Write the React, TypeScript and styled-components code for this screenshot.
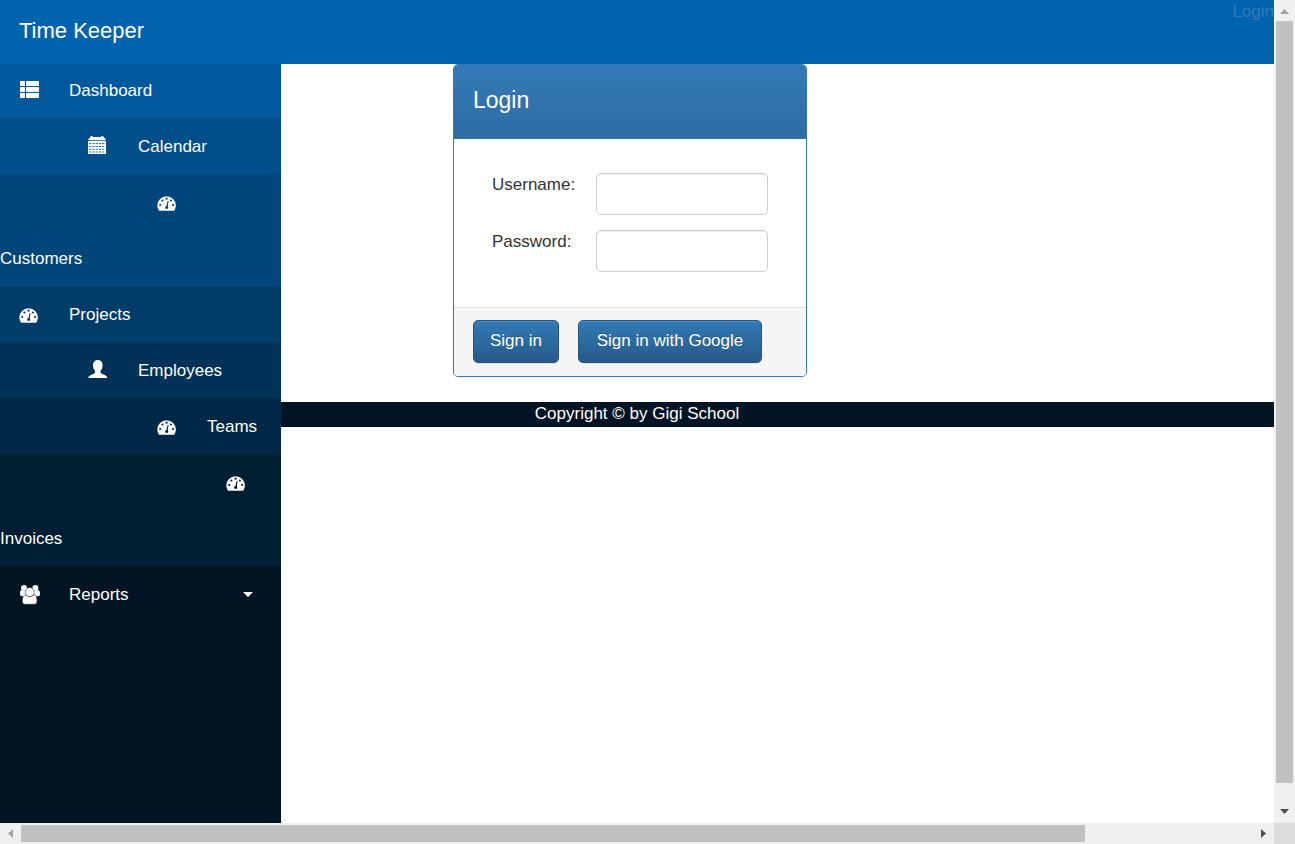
import React from "react";
import styled, { createGlobalStyle } from "styled-components";

const GlobalStyle = createGlobalStyle`
  *, *::before, *::after { box-sizing: border-box; }
  body {
    margin: 0;
    overflow: hidden;
    background: #fff;
    color: #333;
    font-family: "Liberation Sans", Arial, sans-serif;
    font-size: 17px;
    line-height: 23px;
  }
`;

/* Window frame: page plus its two scroll bars */

const Frame = styled.div`
  display: grid;
  grid-template-columns: minmax(0, 1fr) 21px;
  grid-template-rows: minmax(0, 1fr) 21px;
  height: 100vh;
`;

const Page = styled.div`
  display: flex;
  flex-direction: column;
  overflow: hidden;
`;

const ScrollBar = styled.div<{ $vertical?: boolean }>`
  display: flex;
  flex-direction: ${(p) => (p.$vertical ? "column" : "row")};
  background: #f0f0f0;
`;

const ScrollArrow = styled.svg`
  display: block;
  flex: none;
  width: 21px;
  height: 21px;
`;

const ScrollRail = styled.div<{ $vertical?: boolean }>`
  flex: 1;
  min-width: 0;
  min-height: 0;
  padding: ${(p) => (p.$vertical ? "0 2px" : "2px 0")};
`;

const ScrollThumb = styled.div<{ $vertical?: boolean; $size: number }>`
  width: ${(p) => (p.$vertical ? "100%" : `${p.$size}%`)};
  height: ${(p) => (p.$vertical ? `${p.$size}%` : "100%")};
  background: #c1c1c1;
`;

const ScrollCorner = styled.div`
  background: #dcdcdc;
`;

/* Header */

const Header = styled.header`
  position: relative;
  z-index: 1;
  display: flex;
  flex: none;
  align-items: flex-start;
  justify-content: space-between;
  height: 64px;
  margin-bottom: -1px;
  background: #0063ae;
`;

const Brand = styled.a`
  padding: 0 19px;
  color: #fff;
  font-size: 22px;
  line-height: 62px;
  text-decoration: none;
`;

const LoginLink = styled.a`
  color: #337ab7;
  text-decoration: none;
`;

/* Side navigation */

const Columns = styled.div`
  display: flex;
  flex: 1;
  min-height: 0;
`;

const Sidebar = styled.nav`
  flex: none;
  width: 281px;
  overflow: hidden;
  background: #001423;
`;

const NavList = styled.ul`
  margin: 0;
  padding: 0;
  list-style: none;
`;

const NavLink = styled.a<{ $shade: string }>`
  display: flex;
  flex-wrap: wrap;
  align-items: center;
  background: ${(p) => p.$shade};
  color: #fff;
  line-height: 56px;
  text-decoration: none;
`;

const NavIcon = styled.span<{ $step: number }>`
  display: flex;
  align-items: center;
  height: 56px;
  margin-left: ${(p) => 19 + p.$step * 69}px;
  margin-right: 28px;

  svg {
    width: 22px;
    height: 24px;
    fill: #fff;
  }
`;

const Caret = styled.span`
  margin: 0 28px 2px auto;
  border-top: 5px solid #fff;
  border-left: 5px solid transparent;
  border-right: 5px solid transparent;
`;

/* Main column */

const Main = styled.main`
  flex: 1;
  min-width: 0;
  padding-top: 1px;
`;

const Panel = styled.form`
  width: 354px;
  margin: 0 0 25px 172px;
  overflow: hidden;
  border: 1px solid #337ab7;
  border-radius: 5px;
  box-shadow: 0 1px 2px rgba(0, 0, 0, 0.05);
`;

const PanelHeading = styled.div`
  padding: 23px 19px 25px;
  border-bottom: 1px solid #337ab7;
  background: linear-gradient(to bottom, #337ab7 0%, #2e6da4 100%);
`;

const PanelTitle = styled.h1`
  margin: 0;
  color: #fff;
  font-size: 23px;
  font-weight: 400;
  line-height: 25px;
`;

const PanelBody = styled.div`
  display: flex;
  flex-direction: column;
  gap: 15px;
  padding: 34px 38px 35px;
`;

const Field = styled.div`
  display: flex;
  justify-content: space-between;
`;

const TextInput = styled.input`
  width: 172px;
  height: 42px;
  padding: 7px 15px;
  border: 1px solid #ccc;
  border-radius: 5px;
  background: #fff;
  box-shadow: inset 0 1px 1px rgba(0, 0, 0, 0.075);
  color: #555;
  font: inherit;
`;

const PanelFooter = styled.div`
  display: flex;
  gap: 19px;
  padding: 12px 19px 13px;
  border-top: 1px solid #ddd;
  background: #f5f5f5;
`;

const Button = styled.button<{ $wide?: boolean }>`
  height: 43px;
  min-width: ${(p) => (p.$wide ? 184 : 86)}px;
  padding: 0 16px 2px;
  border: 1px solid #245580;
  border-radius: 5px;
  background: linear-gradient(to bottom, #337ab7 0%, #265a88 100%);
  box-shadow: inset 0 1px 0 rgba(255, 255, 255, 0.15), 0 1px 1px rgba(0, 0, 0, 0.075);
  color: #fff;
  font: inherit;
  text-shadow: 0 -1px 0 rgba(0, 0, 0, 0.2);
  white-space: nowrap;
`;

const Copyright = styled.footer`
  padding: 0 281px 2px 0;
  background: #001423;
  color: #fff;
  text-align: center;
`;

/* Icons */

const ListIcon = () => (
  <svg viewBox="0 0 22 24" aria-hidden="true">
    {[2, 8, 14].map((y) => (
      <g key={y}>
        <rect x="1" y={y} width="5" height="5" rx="0.8" />
        <rect x="7" y={y} width="13" height="5" rx="0.8" />
      </g>
    ))}
  </svg>
);

const CalendarIcon = ({ hole }: { hole: string }) => (
  <svg viewBox="0 0 22 24" aria-hidden="true">
    <path d="M0.500 5.200V3.800L2.500 2.200V1.600Q2.500 1 3.700 1T5 1.600V2H13V1.600Q13 1 14.200 1T15.500 1.600V2.200L17.500 3.800V5.200Z" />
    <rect x="0" y="6" width="18" height="13" />
    {[8.2, 11, 13.8, 16.600].map((y) =>
      [1.2, 4.4, 7.6, 10.8, 14].map((x) => (
        <rect key={`${x}-${y}`} x={x} y={y} width="2.200" height="0.800" fill={hole} />
      ))
    )}
  </svg>
);

const GaugeIcon = ({ hole }: { hole: string }) => (
  <svg viewBox="0 0 22 24" aria-hidden="true">
    <path d="M2 19.700Q0.300 17.400 0.300 14.500A9.300 9.300 0 0 1 18.900 14.500Q18.900 17.400 17.200 19.700Z" />
    <g fill={hole}>
      <circle cx="3.200" cy="14" r="1.100" />
      <circle cx="5.400" cy="9.500" r="1.100" />
      <circle cx="9.600" cy="7.700" r="1.100" />
      <circle cx="13.900" cy="9.500" r="1.100" />
      <circle cx="16.100" cy="14" r="1.100" />
      <path d="M10.700 9.700L11.600 9.900L10.800 15.200Q11.500 16 11.200 17Q10.700 18.100 9.500 18Q8.200 17.800 8.100 16.500Q8.200 15.300 9.400 14.900Z" />
    </g>
  </svg>
);

const UserIcon = () => (
  <svg viewBox="0 0 22 24" aria-hidden="true">
    <path d="M9.800 1C12.800 1 14.600 3 14.600 6C14.600 8.600 13.800 10.600 12.600 11.800V13.300C12.600 14.200 13 14.400 14.200 14.900C17 16 19.400 16.800 19.400 19H0.200C0.200 16.800 2.600 16 5.400 14.900C6.600 14.400 7 14.200 7 13.300V11.800C5.800 10.600 5 8.600 5 6C5 3 6.800 1 9.800 1Z" />
  </svg>
);

const UsersIcon = ({ hole }: { hole: string }) => (
  <svg viewBox="0 0 22 24" aria-hidden="true">
    <circle cx="5" cy="5" r="3" />
    <circle cx="16.400" cy="5" r="3" />
    <path d="M1 11.500C1 8.500 1.300 7 2.500 7C3.200 7.700 6.500 8 7.500 7.200V13.200H3.200Q1 13.200 1 11.500Z" />
    <path d="M21 11.500C21 8.500 20.500 7 19.200 7C18.500 7.700 15.200 8 14.200 7.200V13.200H18.800Q21 13.200 21 11.500Z" />
    <g stroke={hole} strokeWidth="0.500">
      <path d="M3.300 18.200C3.300 14.700 4.200 12 6.600 12C9 13.800 12.600 13.800 15 12C17.400 12 18 14.700 18 18.200Q18 21.300 15.400 21.300H6Q3.300 21.300 3.300 18.200Z" />
      <circle cx="10.700" cy="9" r="4.500" />
    </g>
  </svg>
);

const navItems = [
  { label: "Dashboard", step: 0, shade: "#00599d", Icon: ListIcon },
  { label: "Calendar", step: 1, shade: "#004f8b", Icon: CalendarIcon },
  { label: "Customers", step: 2, shade: "#00467a", Icon: GaugeIcon },
  { label: "Projects", step: 0, shade: "#003c69", Icon: GaugeIcon },
  { label: "Employees", step: 1, shade: "#003257", Icon: UserIcon },
  { label: "Teams", step: 2, shade: "#002846", Icon: GaugeIcon },
  { label: "Invoices", step: 3, shade: "#001e34", Icon: GaugeIcon },
  { label: "Reports", step: 0, shade: "#001423", Icon: UsersIcon, menu: true },
];

export default function App() {
  return (
    <>
      <GlobalStyle />
      <Frame>
        <Page>
          <Header>
            <Brand href="#home">Time Keeper</Brand>
            <LoginLink href="#login">Login</LoginLink>
          </Header>
          <Columns>
            <Sidebar aria-label="Main">
              <NavList>
                {navItems.map(({ label, step, shade, Icon, menu }) => (
                  <li key={label}>
                    <NavLink href={`#${label.toLowerCase()}`} $shade={shade}>
                      <NavIcon $step={step}>
                        <Icon hole={shade} />
                      </NavIcon>
                      <span>{label}</span>
                      {menu && <Caret />}
                    </NavLink>
                  </li>
                ))}
              </NavList>
            </Sidebar>
            <Main>
              <Panel onSubmit={(e) => e.preventDefault()}>
                <PanelHeading>
                  <PanelTitle>Login</PanelTitle>
                </PanelHeading>
                <PanelBody>
                  <Field>
                    <label htmlFor="username">Username:</label>
                    <TextInput id="username" type="text" />
                  </Field>
                  <Field>
                    <label htmlFor="password">Password:</label>
                    <TextInput id="password" type="password" />
                  </Field>
                </PanelBody>
                <PanelFooter>
                  <Button type="submit">Sign in</Button>
                  <Button type="button" $wide>
                    Sign in with Google
                  </Button>
                </PanelFooter>
              </Panel>
              <Copyright>Copyright © by Gigi School</Copyright>
            </Main>
          </Columns>
        </Page>
        <ScrollBar $vertical aria-hidden="true">
          <ScrollArrow viewBox="0 0 21 21">
            <path d="M6 14L10.500 9L15 14Z" fill="#a3a3a3" />
          </ScrollArrow>
          <ScrollRail $vertical>
            <ScrollThumb $vertical $size={97.6} />
          </ScrollRail>
          <ScrollArrow viewBox="0 0 21 21">
            <path d="M6 7L10.500 12L15 7Z" fill="#505050" />
          </ScrollArrow>
        </ScrollBar>
        <ScrollBar aria-hidden="true">
          <ScrollArrow viewBox="0 0 21 21">
            <path d="M13 6L8 10.500L13 15Z" fill="#a3a3a3" />
          </ScrollArrow>
          <ScrollRail>
            <ScrollThumb $size={86.4} />
          </ScrollRail>
          <ScrollArrow viewBox="0 0 21 21">
            <path d="M8 6L13 10.500L8 15Z" fill="#505050" />
          </ScrollArrow>
        </ScrollBar>
        <ScrollCorner />
      </Frame>
    </>
  );
}
